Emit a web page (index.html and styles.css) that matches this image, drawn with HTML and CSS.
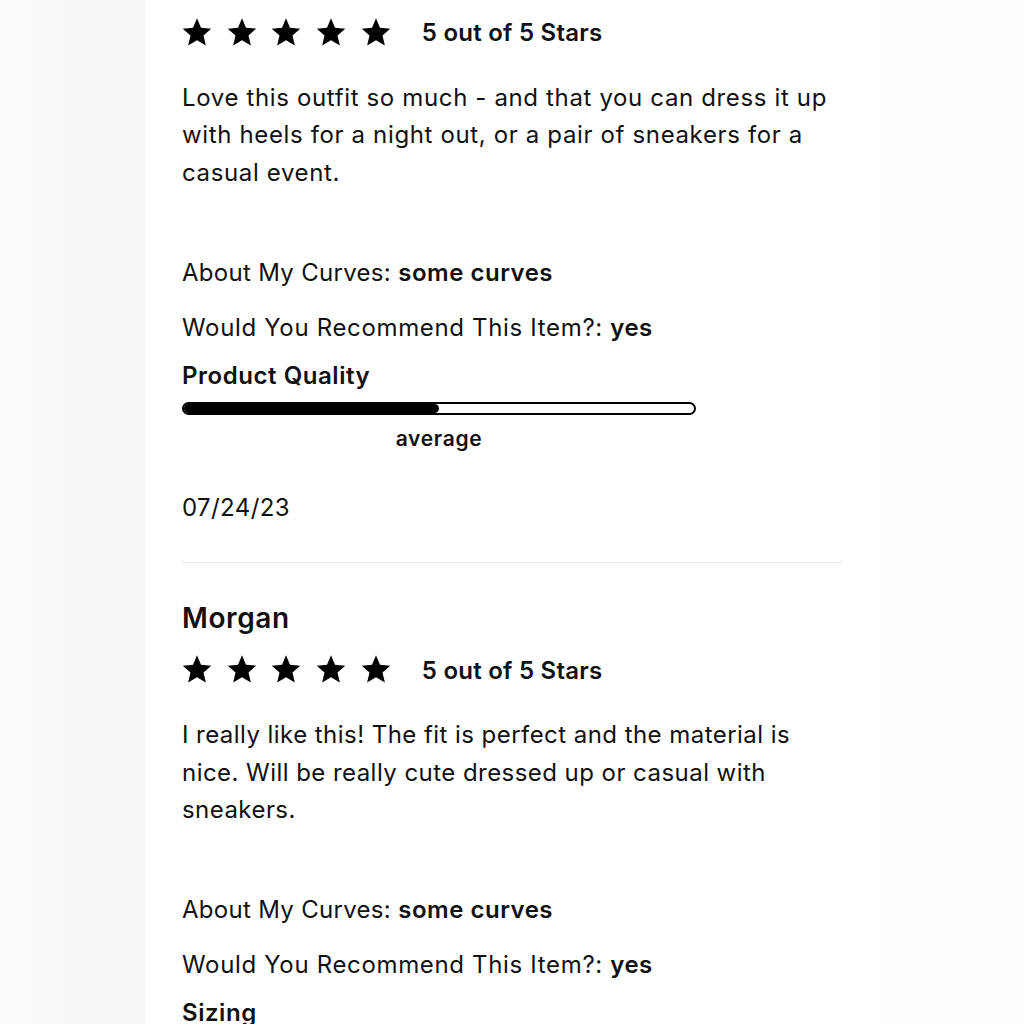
FILE: index.html
```html
<!DOCTYPE html>
<html lang="en">
<head>
<meta charset="utf-8">
<title>Reviews</title>
<link rel="stylesheet" href="styles.css">
</head>
<body>
<div class="page">
  <div class="side-left"></div>
  <main class="card">
    <section class="review review-first">
      <div class="rating">
        <div class="stars">
          <svg class="star" viewBox="0 0 24 24"><polygon points="12,1 15.2,8.6 23.4,9.3 17.2,14.7 19.1,22.8 12,18.5 4.9,22.8 6.8,14.7 0.6,9.3 8.8,8.6"/></svg>
          <svg class="star" viewBox="0 0 24 24"><polygon points="12,1 15.2,8.6 23.4,9.3 17.2,14.7 19.1,22.8 12,18.5 4.9,22.8 6.8,14.7 0.6,9.3 8.8,8.6"/></svg>
          <svg class="star" viewBox="0 0 24 24"><polygon points="12,1 15.2,8.6 23.4,9.3 17.2,14.7 19.1,22.8 12,18.5 4.9,22.8 6.8,14.7 0.6,9.3 8.8,8.6"/></svg>
          <svg class="star" viewBox="0 0 24 24"><polygon points="12,1 15.2,8.6 23.4,9.3 17.2,14.7 19.1,22.8 12,18.5 4.9,22.8 6.8,14.7 0.6,9.3 8.8,8.6"/></svg>
          <svg class="star" viewBox="0 0 24 24"><polygon points="12,1 15.2,8.6 23.4,9.3 17.2,14.7 19.1,22.8 12,18.5 4.9,22.8 6.8,14.7 0.6,9.3 8.8,8.6"/></svg>
        </div>
        <span class="rating-text">5 out of 5 Stars</span>
      </div>
      <p class="body">Love this outfit so much - and that you can dress it up with heels for a night out, or a pair of sneakers for a casual event.</p>
      <p class="meta meta-first"><span class="label">About My Curves:</span> <strong>some curves</strong></p>
      <p class="meta meta-second"><span class="label">Would You Recommend This Item?:</span> <strong>yes</strong></p>
      <h3 class="scale-title">Product Quality</h3>
      <div class="scale">
        <div class="bar"><div class="fill" style="width:50%"></div></div>
        <div class="scale-label">average</div>
      </div>
      <p class="date">07/24/23</p>
    </section>
    <hr class="divider">
    <section class="review">
      <h2 class="name">Morgan</h2>
      <div class="rating">
        <div class="stars">
          <svg class="star" viewBox="0 0 24 24"><polygon points="12,1 15.2,8.6 23.4,9.3 17.2,14.7 19.1,22.8 12,18.5 4.9,22.8 6.8,14.7 0.6,9.3 8.8,8.6"/></svg>
          <svg class="star" viewBox="0 0 24 24"><polygon points="12,1 15.2,8.6 23.4,9.3 17.2,14.7 19.1,22.8 12,18.5 4.9,22.8 6.8,14.7 0.6,9.3 8.8,8.6"/></svg>
          <svg class="star" viewBox="0 0 24 24"><polygon points="12,1 15.2,8.6 23.4,9.3 17.2,14.7 19.1,22.8 12,18.5 4.9,22.8 6.8,14.7 0.6,9.3 8.8,8.6"/></svg>
          <svg class="star" viewBox="0 0 24 24"><polygon points="12,1 15.2,8.6 23.4,9.3 17.2,14.7 19.1,22.8 12,18.5 4.9,22.8 6.8,14.7 0.6,9.3 8.8,8.6"/></svg>
          <svg class="star" viewBox="0 0 24 24"><polygon points="12,1 15.2,8.6 23.4,9.3 17.2,14.7 19.1,22.8 12,18.5 4.9,22.8 6.8,14.7 0.6,9.3 8.8,8.6"/></svg>
        </div>
        <span class="rating-text">5 out of 5 Stars</span>
      </div>
      <p class="body body-second">I really like this! The fit is perfect and the material is nice. Will be really cute dressed up or casual with sneakers.</p>
      <p class="meta meta-first"><span class="label">About My Curves:</span> <strong>some curves</strong></p>
      <p class="meta meta-second"><span class="label">Would You Recommend This Item?:</span> <strong>yes</strong></p>
      <h3 class="scale-title">Sizing</h3>
    </section>
  </main>
  <div class="side-right"></div>
</div>
</body>
</html>
```

FILE: styles.css
```css
* { box-sizing: border-box; }
html, body { margin: 0; padding: 0; }
body {
  font-family: "Inter", "Noto Sans", sans-serif;
  color: #111;
  background: #fff;
  overflow: hidden;
}
.page {
  display: flex;
  height: 1024px;
  overflow: hidden;
}
.side-left {
  width: 145px;
  flex: none;
  background: linear-gradient(to right, #fbfbfb, #f5f5f5);
}
.card {
  width: 735px;
  flex: none;
  background: #fff;
  padding: 17px 38px 0 37px;
}
.side-right {
  flex: 1;
  background: #fdfdfd;
}
.review { margin: 0; }
.rating {
  display: flex;
  align-items: center;
  height: 29px;
}
.stars {
  display: flex;
  gap: 14.7px;
}
.star {
  width: 30px;
  height: 30px;
  fill: #000;
  display: block;
}
.rating-text {
  margin-left: 31px;
  font-size: 24px;
  font-weight: 600;
  line-height: 29px;
  padding-top: 2px;
  letter-spacing: 0.25px;
}
.body {
  margin: 32.5px 0 0;
  font-size: 24px;
  line-height: 37.5px;
  font-weight: 400;
  letter-spacing: 0.64px;
}
.body-second { letter-spacing: 0.45px; }
.meta {
  margin: 0;
  font-size: 24px;
  line-height: 37.5px;
  letter-spacing: 0.55px;
}
.meta-first .label { letter-spacing: 0.3px; }
.meta-second .label { letter-spacing: 0.66px; }
.meta strong { font-weight: 600; letter-spacing: 0.5px; }
.meta-first { margin-top: 62.5px; }
.meta-second { margin-top: 17.5px; }
.scale-title {
  margin: 10.5px 0 0;
  font-size: 24px;
  line-height: 37.5px;
  font-weight: 600;
  letter-spacing: 0.55px;
}
.scale {
  width: 514px;
  margin-top: 8px;
}
.bar {
  height: 13px;
  border: 2px solid #000;
  border-radius: 7px;
  overflow: hidden;
  background: #fff;
}
.fill {
  height: 100%;
  background: #000;
  border-radius: 0 5px 5px 0;
}
.scale-label {
  margin-top: 11.2px;
  text-align: center;
  font-size: 21px;
  line-height: 25px;
  font-weight: 600;
  letter-spacing: 0.7px;
}
.date {
  margin: 38.3px 0 0;
  font-size: 24px;
  line-height: 37.5px;
  letter-spacing: 0.4px;
}
.divider {
  margin: 35px 0 0;
  border: 0;
  height: 1px;
  background: #e6e6e6;
}
.name {
  margin: 38px 0 0;
  font-size: 28px;
  line-height: 34px;
  font-weight: 600;
  letter-spacing: 0.6px;
}
.name + .rating { margin-top: 20px; }
```
